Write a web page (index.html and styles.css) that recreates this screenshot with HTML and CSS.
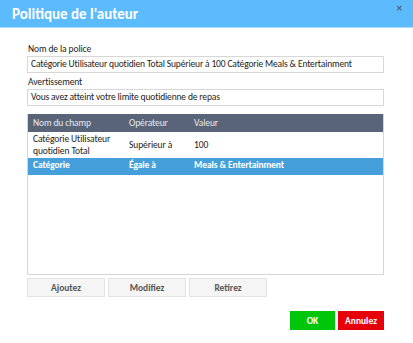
FILE: index.html
```html
<!DOCTYPE html>
<html lang="fr">
<head>
    <meta charset="UTF-8">
    <title>Politique de l'auteur</title>
    <link rel="stylesheet" href="styles.css">
</head>
<body>

<div class="dialog">
    <div class="titlebar">
        <h1>Politique de l'auteur</h1>
        <span class="close">&#x2715;</span>
    </div>

    <div class="content">
        <label class="field-label">Nom de la police</label>
        <div class="field">Catégorie Utilisateur quotidien Total Supérieur à 100 Catégorie Meals &amp; Entertainment</div>

        <label class="field-label">Avertissement</label>
        <div class="field">Vous avez atteint votre limite quotidienne de repas</div>

        <div class="grid">
            <table>
                <tr>
                    <th class="col-name">Nom du champ</th>
                    <th class="col-op">Opérateur</th>
                    <th>Valeur</th>
                </tr>
                <tr>
                    <td>Catégorie Utilisateur quotidien Total</td>
                    <td>Supérieur à</td>
                    <td>100</td>
                </tr>
                <tr class="selected">
                    <td>Catégorie</td>
                    <td>Égale à</td>
                    <td>Meals &amp; Entertainment</td>
                </tr>
            </table>
        </div>

        <div class="row-actions">
            <button>Ajoutez</button>
            <button>Modifiez</button>
            <button>Retirez</button>
        </div>

        <div class="dialog-actions">
            <button class="ok">OK</button>
            <button class="cancel">Annulez</button>
        </div>
    </div>
</div>

</body>
</html>
```

FILE: styles.css
```css
body {
    margin: 0;
    font-family: Carlito, Lato, "Open Sans", sans-serif;
    background-color: #fff;
}

.dialog {
    width: 413px;
    height: 343px;
}

.titlebar {
    background-color: #5bbbfc;
    height: 28px;
    border-bottom: 1px solid #a9dcfd;
    display: flex;
    align-items: center;
    justify-content: space-between;
    padding: 0 10px 0 12px;
    box-sizing: border-box;
}

.titlebar h1 {
    margin: 0;
    font-size: 15px;
    font-weight: 600;
    color: #fff;
}

.close {
    align-self: flex-start;
    margin-top: 3px;
    font-size: 8px;
    color: #55657e;
    font-weight: bold;
}

.content {
    padding: 15px 29px 0 27px;
}

.field-label {
    display: block;
    font-size: 9.5px;
    letter-spacing: -0.1px;
    color: #222;
    margin: 0 0 1px 1px;
    line-height: 12px;
}

.field {
    height: 17px;
    border: 1px solid #d7d7d7;
    box-sizing: border-box;
    font-size: 9.5px;
    letter-spacing: -0.15px;
    line-height: 15px;
    padding: 0 3px;
    color: #222;
    white-space: nowrap;
    overflow: hidden;
    margin-bottom: 3px;
}

.grid {
    margin-top: 8px;
    height: 161px;
    border: 1px solid #d5d5dc;
    border-top: none;
    box-sizing: border-box;
}

table {
    border-collapse: collapse;
    width: 100%;
    font-size: 9.5px;
    letter-spacing: -0.1px;
}

th, td {
    text-align: left;
    padding: 0 5px;
    font-weight: normal;
    color: #222;
}

th {
    background-color: #5a6479;
    color: #e6e9ee;
    height: 18px;
}

td {
    height: 26px;
    line-height: 12px;
}

.col-name {
    width: 86px;
}

.col-op {
    width: 55px;
}

.selected td {
    background-color: #459fdb;
    color: #fff;
    font-weight: bold;
    height: 16px;
    vertical-align: top;
    padding-top: 1px;
}

.row-actions {
    display: flex;
    gap: 3px;
    margin-top: 3px;
}

.row-actions button {
    width: 78px;
    height: 19px;
    background-color: #f5f5f5;
    border: 1px solid #e3e3e3;
    font-family: inherit;
    font-size: 9.5px;
    font-weight: 600;
    color: #555;
    padding: 0;
}

.dialog-actions {
    display: flex;
    justify-content: flex-end;
    gap: 3px;
    margin-top: 14px;
}

.dialog-actions button {
    height: 19px;
    border: none;
    color: #fff;
    font-family: inherit;
    font-size: 9.5px;
    font-weight: bold;
    padding: 0;
}

.ok {
    width: 45px;
    background-color: #00c60a;
}

.cancel {
    width: 46px;
    background-color: #e6000c;
}
```
